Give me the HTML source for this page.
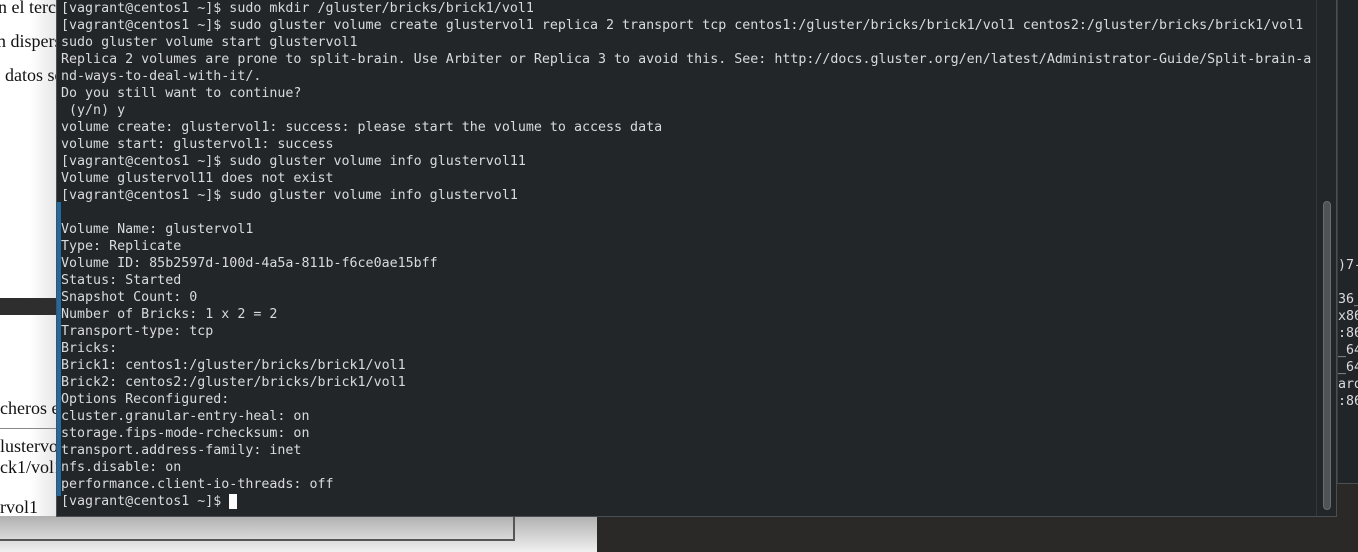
<!DOCTYPE html>
<html><head><meta charset="utf-8"><style>
*{margin:0;padding:0;box-sizing:border-box}
body{width:1358px;height:552px;overflow:hidden;position:relative;background:#2a2928;font-family:"Liberation Serif",serif}
.doc{position:absolute;left:0;top:0;width:597px;height:552px;background:linear-gradient(90deg,#fff 0,#fff 30px,#e6e6e6 57px);}
.docb{position:absolute;left:0;top:516px;width:597px;height:36px;background:linear-gradient(#b0b0b0,#f0f0f0)}
.dt{position:absolute;left:0;font-size:18px;line-height:20px;color:#111;white-space:nowrap}
.bar{position:absolute;left:0;top:298px;width:57px;height:17px;background:#2e2e2e}
.term{position:absolute;left:56px;top:0;width:1281px;height:517px;background:#232629;border:1px solid #4a4f55;border-top:none}
.blue{position:absolute;left:57px;top:202px;width:4px;height:294px;background:#1f6aa0}
pre{position:absolute;left:61px;top:0px;font-family:"DejaVu Sans Mono","Liberation Mono",monospace;font-size:13.32px;line-height:17px;color:#d8dadc}
.sep{position:absolute;left:1316px;top:0;width:1px;height:516px;background:#33373b}
.sb{position:absolute;left:1323px;top:201px;width:8px;height:309px;border-radius:4px;background:#505356;border:1px solid #6a6d70}
.right{position:absolute;left:1337px;top:0;width:21px;height:484px;background:#222528;border-left:1px solid #3a3e42;border-bottom:1px solid #4a4f55}
.rt{position:absolute;left:1338px;top:257px;font-family:"DejaVu Sans Mono",monospace;font-size:13.32px;line-height:17px;color:#d8dadc;white-space:pre}
</style></head><body>
<div class="doc"></div>
<div class="docb"></div>
<div style="position:absolute;left:0;top:470px;width:515px;height:71px;border-right:2px solid #555;border-bottom:2px solid #555"></div>
<div class="dt" style="top:-3px;left:-2px">n el terce</div>
<div class="dt" style="top:31px;left:-3px">n dispers</div>
<div class="dt" style="top:65px;left:5px">datos so</div>
<div class="bar"></div>
<div style="position:absolute;left:0;top:428px;width:57px;height:1px;background:#888"></div>
<div class="dt" style="top:398px;left:0">cheros e</div>
<div class="dt" style="top:436px;left:0">lustervo</div>
<div class="dt" style="top:457px;left:0">ck1/vol1</div>
<div class="dt" style="top:497px;left:0">rvol1</div>
<div class="right"></div>
<div class="rt">)7-2

36_6
x86
:86_
_64
_64
ard
:86_</div>
<div class="term"></div>
<div class="blue"></div>
<div class="sep"></div>
<div class="sb"></div>
<pre>[vagrant@centos1 ~]$ sudo mkdir /gluster/bricks/brick1/vol1
[vagrant@centos1 ~]$ sudo gluster volume create glustervol1 replica 2 transport tcp centos1:/gluster/bricks/brick1/vol1 centos2:/gluster/bricks/brick1/vol1
sudo gluster volume start glustervol1
Replica 2 volumes are prone to split-brain. Use Arbiter or Replica 3 to avoid this. See: http://docs.gluster.org/en/latest/Administrator-Guide/Split-brain-a
nd-ways-to-deal-with-it/.
Do you still want to continue?
 (y/n) y
volume create: glustervol1: success: please start the volume to access data
volume start: glustervol1: success
[vagrant@centos1 ~]$ sudo gluster volume info glustervol11
Volume glustervol11 does not exist
[vagrant@centos1 ~]$ sudo gluster volume info glustervol1

Volume Name: glustervol1
Type: Replicate
Volume ID: 85b2597d-100d-4a5a-811b-f6ce0ae15bff
Status: Started
Snapshot Count: 0
Number of Bricks: 1 x 2 = 2
Transport-type: tcp
Bricks:
Brick1: centos1:/gluster/bricks/brick1/vol1
Brick2: centos2:/gluster/bricks/brick1/vol1
Options Reconfigured:
cluster.granular-entry-heal: on
storage.fips-mode-rchecksum: on
transport.address-family: inet
nfs.disable: on
performance.client-io-threads: off
[vagrant@centos1 ~]$ <span style="background:#fcfcfc">&nbsp;</span></pre>
</body></html>
